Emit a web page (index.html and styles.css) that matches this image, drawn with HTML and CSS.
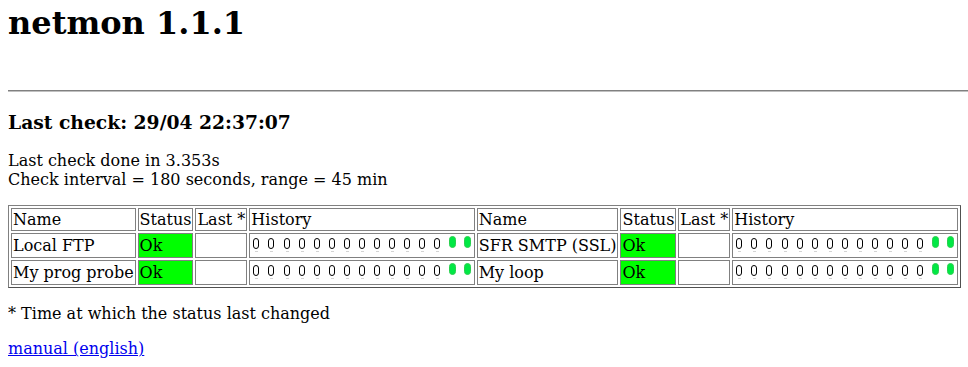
FILE: index.html
```html
<!DOCTYPE html>
<html lang="en">
<head>
    <meta charset="UTF-8">
    <title>netmon 1.1.1</title>
    <link rel="stylesheet" href="styles.css">
</head>
<body>
    <h1 class="title">netmon 1.1.1</h1>
    <hr class="rule">
    <h3 class="last-check">Last check: 29/04 22:37:07</h3>
    <p class="summary">Last check done in 3.353s<br>Check interval = 180 seconds, range = 45 min</p>

    <table class="probes">
        <tr>
            <td>Name</td><td>Status</td><td>Last *</td><td>History</td>
            <td>Name</td><td>Status</td><td>Last *</td><td>History</td>
        </tr>
        <tr>
            <td>Local FTP</td><td class="ok">Ok</td><td></td>
            <td class="history"><span class="dot"></span> <span class="dot"></span> <span class="dot"></span> <span class="dot"></span> <span class="dot"></span> <span class="dot"></span> <span class="dot"></span> <span class="dot"></span> <span class="dot"></span> <span class="dot"></span> <span class="dot"></span> <span class="dot"></span> <span class="dot"></span> <span class="dot up"></span> <span class="dot up"></span></td>
            <td>SFR SMTP (SSL)</td><td class="ok">Ok</td><td></td>
            <td class="history"><span class="dot"></span> <span class="dot"></span> <span class="dot"></span> <span class="dot"></span> <span class="dot"></span> <span class="dot"></span> <span class="dot"></span> <span class="dot"></span> <span class="dot"></span> <span class="dot"></span> <span class="dot"></span> <span class="dot"></span> <span class="dot"></span> <span class="dot up"></span> <span class="dot up"></span></td>
        </tr>
        <tr>
            <td>My prog probe</td><td class="ok">Ok</td><td></td>
            <td class="history"><span class="dot"></span> <span class="dot"></span> <span class="dot"></span> <span class="dot"></span> <span class="dot"></span> <span class="dot"></span> <span class="dot"></span> <span class="dot"></span> <span class="dot"></span> <span class="dot"></span> <span class="dot"></span> <span class="dot"></span> <span class="dot"></span> <span class="dot up"></span> <span class="dot up"></span></td>
            <td>My loop</td><td class="ok">Ok</td><td></td>
            <td class="history"><span class="dot"></span> <span class="dot"></span> <span class="dot"></span> <span class="dot"></span> <span class="dot"></span> <span class="dot"></span> <span class="dot"></span> <span class="dot"></span> <span class="dot"></span> <span class="dot"></span> <span class="dot"></span> <span class="dot"></span> <span class="dot"></span> <span class="dot up"></span> <span class="dot up"></span></td>
        </tr>
    </table>

    <p class="note">* Time at which the status last changed</p>
    <p class="links"><a href="#">manual (english)</a></p>
</body>
</html>
```

FILE: styles.css
```css
body {
    margin: 8px 0 8px 8px;
    font-family: "DejaVu Serif", serif;
    font-size: 16px;
    color: #000;
    background: #fff;
}

.title {
    font-size: 32px;
    margin: -4px 0 48px 0;
}

.rule {
    margin: 0 0 2px 0;
    height: 0;
    border: none;
    border-top: 1px solid #808080;
    border-bottom: 1px solid #c0c0c0;
}

.last-check {
    font-size: 18.72px;
    margin: 18.72px 0;
}

.summary {
    margin: 16px 0;
}

.probes {
    border: 1px solid #808080;
    border-bottom-color: #505050;
    border-right-color: #505050;
    border-spacing: 2px;
}

.probes td {
    border: 1px solid #808080;
    padding: 1px;
    white-space: nowrap;
}

.probes td.ok {
    background: #00ff00;
}

/* history marks: one 10x17 slot per check */
.dot {
    position: relative;
    display: inline-block;
    width: 4px;
    height: 9px;
    border: 1px solid #000;
    border-radius: 3px;
    margin: 3px 2px 3px;
}

.dot::after {
    content: "";
    position: absolute;
    left: 1px;
    bottom: -4px;
    width: 3px;
    height: 1px;
    background: #d4d4d4;
}

.dot.up {
    width: 5px;
    height: 10px;
    border: 1px solid #2bcf4f;
    border-radius: 4px;
    background: #00e844;
    margin: 1px 1.5px 4px;
}

.dot.up::after {
    display: none;
}

.note {
    margin: 16px 0;
}

a {
    color: #0000ee;
}
```
